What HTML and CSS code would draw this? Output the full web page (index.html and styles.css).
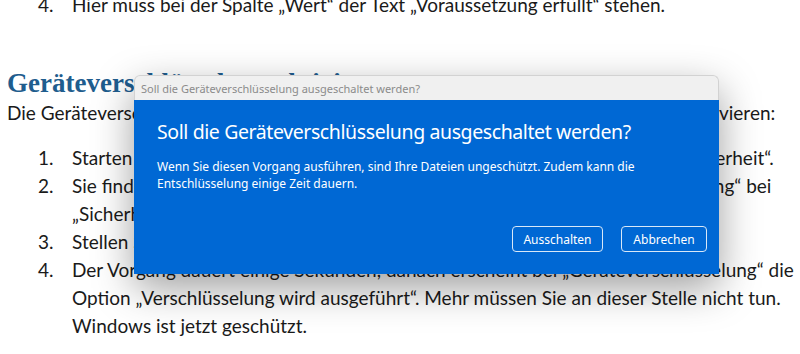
FILE: index.html
```html
<!DOCTYPE html>
<html lang="de">
<head>
<meta charset="UTF-8">
<meta name="viewport" content="width=device-width, initial-scale=1.0">
<title>Geräteverschlüsselung aktivieren</title>
<link rel="stylesheet" href="styles.css">
</head>
<body>
<div class="doc">
  <ol class="steps prev">
    <li><span class="num">4.</span><span>Hier muss bei der Spalte „Wert“ der Text „Voraussetzung erfüllt“ stehen.</span></li>
  </ol>

  <h2>Geräteverschlüsselung aktivieren</h2>
  <p>Die Geräteverschlüsselung können Sie unter Windows 11 in wenigen Schritten so aktivieren:</p>

  <ol class="steps">
    <li><span class="num">1.</span><span>Starten Sie die Einstellungen-App und wechseln Sie zu „Datenschutz und Sicherheit“.</span></li>
    <li><span class="num">2.</span><span>Sie finden den entsprechenden Eintrag zur Funktion der „Geräteverschlüsselung“ bei<br>„Sicherheit“.</span></li>
    <li><span class="num">3.</span><span>Stellen Sie den Schalter auf „Ein“.</span></li>
    <li><span class="num">4.</span><span>Der Vorgang dauert einige Sekunden, danach erscheint bei „Geräteverschlüsselung“ die<br>Option „Verschlüsselung wird ausgeführt“. Mehr müssen Sie an dieser Stelle nicht tun.<br>Windows ist jetzt geschützt.</span></li>
  </ol>
</div>

<!-- Windows-Dialog über dem Dokument -->
<div class="dialog">
  <div class="dialog-bar">Soll die Geräteverschlüsselung ausgeschaltet werden?</div>
  <div class="dialog-body">
    <h3>Soll die Geräteverschlüsselung ausgeschaltet werden?</h3>
    <p>Wenn Sie diesen Vorgang ausführen, sind Ihre Dateien ungeschützt. Zudem kann die<br>Entschlüsselung einige Zeit dauern.</p>
    <div class="dialog-actions">
      <button class="btn-off">Ausschalten</button>
      <button class="btn-cancel">Abbrechen</button>
    </div>
  </div>
</div>
</body>
</html>
```

FILE: styles.css
```css
body {
  margin: 0;
  padding: 0;
  background-color: #ffffff;
  overflow: hidden;
}

.doc {
  font-family: Lato, "Open Sans", sans-serif;
  font-size: 19px;
  color: #1a1a1a;
  margin-top: -9px;
  padding-left: 7px;
}

.steps {
  list-style: none;
  margin: 0;
  padding: 0 0 0 31px;
}

.steps li {
  display: flex;
  line-height: 28px;
  white-space: nowrap;
}

.steps .num {
  width: 34px;
  flex-shrink: 0;
}

.steps.prev {
  margin-bottom: 48px;
}

h2 {
  font-family: "Liberation Serif", serif;
  font-size: 27px;
  font-weight: bold;
  color: #1f5d8e;
  line-height: 32px;
  margin: 0;
}

.doc p {
  margin: 0 0 17px 0;
  line-height: 28px;
  white-space: nowrap;
}

.dialog {
  position: absolute;
  left: 134px;
  top: 75px;
  width: 585px;
  font-family: "Noto Sans", sans-serif;
  box-shadow: 0 14px 40px rgba(0, 0, 0, 0.38);
  border-radius: 6px 6px 0 0;
}

.dialog-bar {
  height: 25px;
  line-height: 25px;
  background-color: #f0f0f0;
  border: 1px solid #d2d2d2;
  border-bottom: none;
  border-radius: 6px 6px 0 0;
  color: #8b8b8b;
  font-size: 11px;
  padding-left: 6px;
  box-sizing: border-box;
}

.dialog-body {
  background-color: #0068d4;
  color: #ffffff;
  padding: 18px 12px 22px 23px;
}

.dialog-body h3 {
  font-size: 19.5px;
  letter-spacing: -0.4px;
  font-weight: normal;
  line-height: 28px;
  margin: 0 0 12px 0;
}

.dialog-body p {
  font-size: 12px;
  line-height: 17px;
  margin: 0 0 34px 0;
}

.dialog-actions {
  display: flex;
  justify-content: flex-end;
  gap: 18px;
}

.dialog-actions button {
  height: 26px;
  background-color: #0068d4;
  color: #ffffff;
  border: 1.5px solid #d8e8f8;
  border-radius: 4px;
  font-family: "Noto Sans", sans-serif;
  font-size: 12px;
  padding: 0;
}

.btn-off {
  width: 91px;
}

.btn-cancel {
  width: 86px;
}
```
